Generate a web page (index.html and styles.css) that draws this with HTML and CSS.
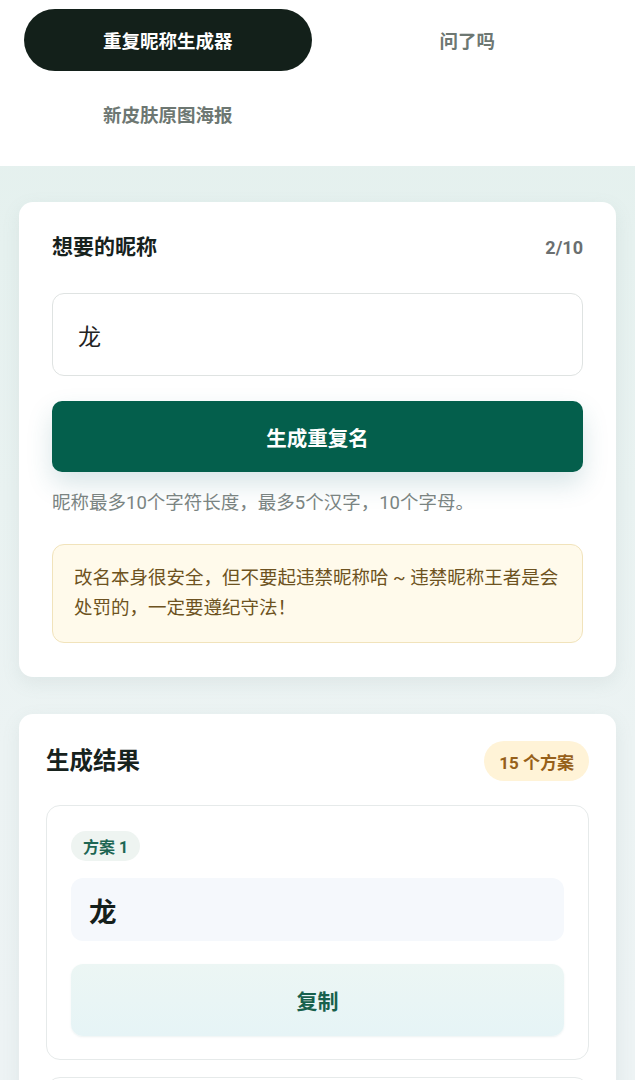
FILE: index.html
```html
<!DOCTYPE html>
<html lang="zh-CN">
<head>
<meta charset="utf-8">
<title>重复昵称生成器</title>
<link rel="stylesheet" href="styles.css">
</head>
<body>
<header class="tabs">
  <div class="tab active">重复昵称生成器</div>
  <div class="tab">问了吗</div>
  <div class="tab">新皮肤原图海报</div>
</header>
<main class="main">
  <section class="card form-card">
    <div class="row">
      <h2 class="label">想要的昵称</h2>
      <span class="count">2/10</span>
    </div>
    <div class="input">龙</div>
    <button class="primary">生成重复名</button>
    <p class="hint">昵称最多10个字符长度，最多5个汉字，10个字母。</p>
    <div class="warn">改名本身很安全，但不要起违禁昵称哈 ~ 违禁昵称王者是会处罚的，一定要遵纪守法！</div>
  </section>
  <section class="card result-card">
    <div class="row">
      <h2 class="title">生成结果</h2>
      <span class="badge">15 个方案</span>
    </div>
    <div class="item">
      <span class="tag">方案 1</span>
      <div class="name">龙</div>
      <button class="copy">复制</button>
    </div>
    <div class="item">
      <span class="tag">方案 2</span>
      <div class="name">龙</div>
      <button class="copy">复制</button>
    </div>
  </section>
</main>
</body>
</html>
```
FILE: styles.css
```css
* { box-sizing: border-box; }
html, body { margin: 0; padding: 0; }
body {
  font-family: Roboto, "Noto Sans CJK SC", sans-serif;
  background: linear-gradient(180deg, #e3f0ed 0%, #ecf3f3 55%, #eef3f5 100%);
  color: #1b2621;
  min-height: 1080px;
}
.tabs {
  background: #ffffff;
  display: grid;
  grid-template-columns: 1fr 1fr;
  column-gap: 12px;
  row-gap: 12px;
  padding: 9px 24px 21px;
}
.tab {
  height: 62px;
  border-radius: 31px;
  display: flex;
  align-items: center;
  justify-content: center;
  font-size: 18.5px;
  font-weight: 700;
  color: #6d7772;
}
.tab.active {
  background: #13201a;
  color: #ffffff;
}
.main {
  padding: 36px 19px 0;
  display: flex;
  flex-direction: column;
  gap: 37px;
}
.card {
  background: #ffffff;
  border-radius: 14px;
  box-shadow: 0 6px 18px rgba(120, 150, 145, 0.12);
}
.form-card {
  padding: 31px 33px 34px;
}
.row {
  display: flex;
  justify-content: space-between;
  align-items: center;
}
.label {
  margin: 0;
  font-size: 21px;
  line-height: 28px;
  font-weight: 700;
  color: #17221d;
}
.count {
  font-size: 18px;
  font-weight: 700;
  color: #6b6f70;
}
.input {
  margin-top: 32px;
  height: 83px;
  border: 1px solid #dfe3e2;
  border-radius: 12px;
  padding: 0 25px;
  display: flex;
  align-items: center;
  font-size: 23px;
  color: #222;
}
.primary {
  display: block;
  width: 100%;
  margin-top: 25px;
  height: 71px;
  border: none;
  border-radius: 10px;
  background: #045f4c;
  color: #ffffff;
  font-family: inherit;
  font-size: 20.5px;
  font-weight: 700;
  box-shadow: 0 12px 26px rgba(40, 110, 120, 0.18);
}
.hint {
  margin: 18px 0 0;
  font-size: 18.5px;
  line-height: 26px;
  color: #7a8482;
}
.warn {
  margin-top: 28px;
  background: #fffaeb;
  border: 1px solid #f1e3bb;
  border-radius: 12px;
  padding: 18px 21px 19px;
  font-size: 18.5px;
  line-height: 30px;
  color: #6d5220;
}
.result-card {
  padding: 27px 27px 20px;
}
.title {
  margin: 0;
  font-size: 23.5px;
  line-height: 30px;
  font-weight: 700;
  color: #17221d;
}
.badge {
  height: 40px;
  padding: 0 15px;
  border-radius: 20px;
  background: #fff3d7;
  color: #96601a;
  font-size: 17px;
  font-weight: 700;
  display: flex;
  align-items: center;
}
.item {
  margin-top: 24px;
  border: 1px solid #e6eaea;
  border-radius: 14px;
  padding: 25px 24px 23px;
  display: flex;
  flex-direction: column;
  align-items: flex-start;
}
.item + .item { margin-top: 17px; }
.tag {
  height: 30px;
  padding: 0 12px;
  border-radius: 15px;
  background: #eef4f1;
  color: #1d6653;
  font-size: 16px;
  font-weight: 700;
  display: flex;
  align-items: center;
}
.name {
  margin-top: 17px;
  width: 100%;
  height: 63px;
  border-radius: 12px;
  background: #f5f8fc;
  padding: 0 18px;
  display: flex;
  align-items: center;
  font-size: 27.5px;
  font-weight: 700;
  color: #15201b;
}
.copy {
  margin-top: 23px;
  width: 100%;
  height: 72px;
  border: none;
  border-radius: 12px;
  background: linear-gradient(180deg, #ecf6f4 0%, #e6f4f6 100%);
  box-shadow: 0 1px 2px rgba(100, 150, 150, 0.12);
  color: #17604c;
  font-family: inherit;
  font-size: 21px;
  font-weight: 700;
}
```
